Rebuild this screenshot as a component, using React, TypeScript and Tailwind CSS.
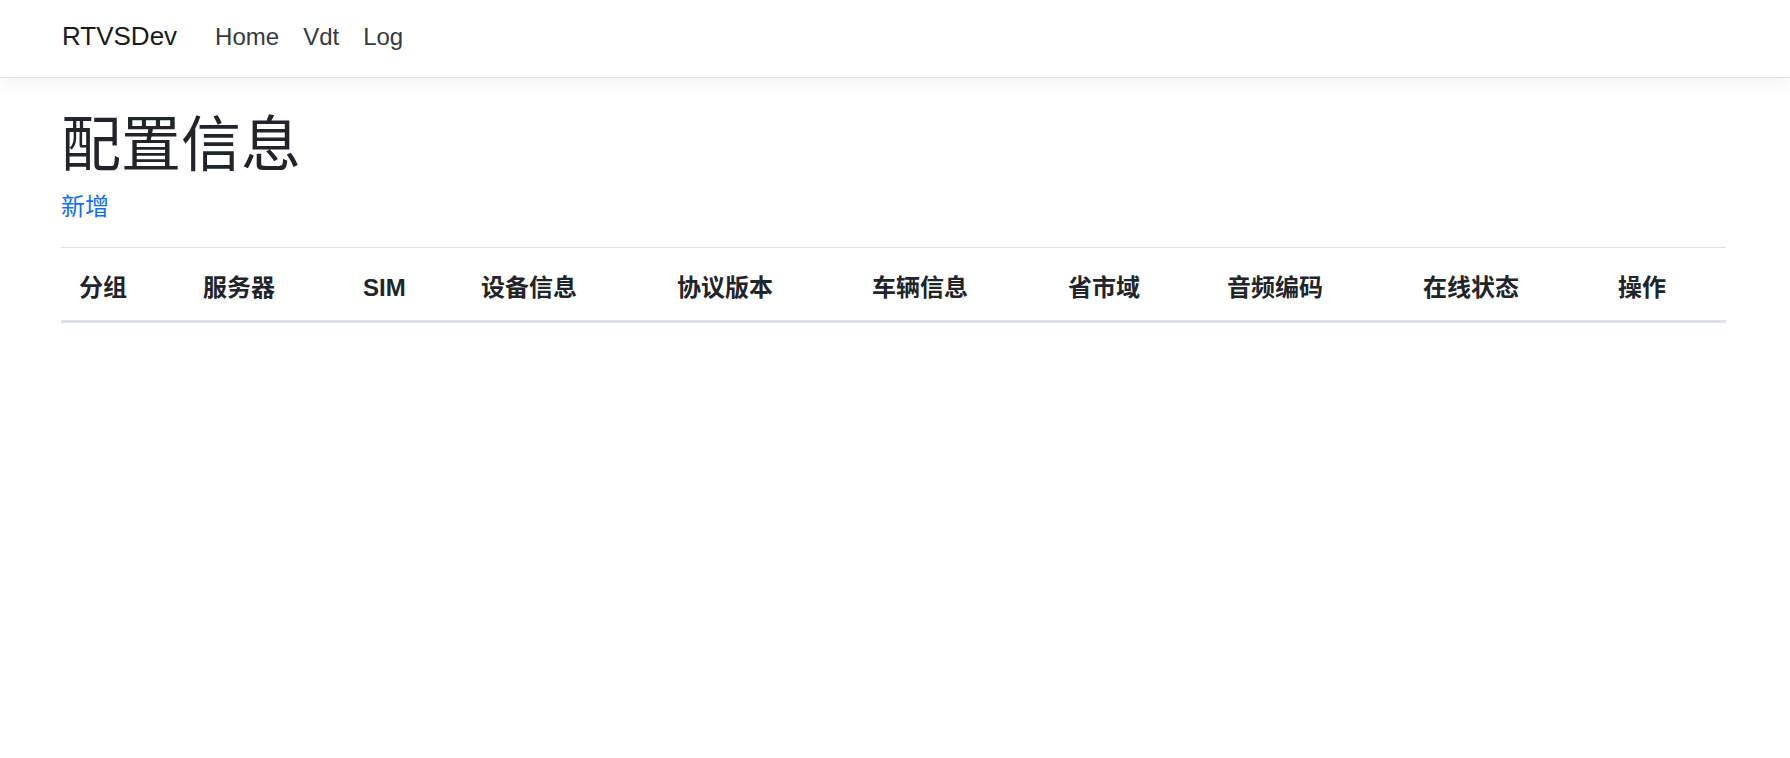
import React from "react";

const FONT = "font-['Liberation_Sans','Noto_Sans_CJK_SC',sans-serif]";

const COLUMNS = [
  { label: "分组", width: "w-[124px]" },
  { label: "服务器", width: "w-[160px]" },
  { label: "SIM", width: "w-[118px]" },
  { label: "设备信息", width: "w-[196px]" },
  { label: "协议版本", width: "w-[195px]" },
  { label: "车辆信息", width: "w-[196px]" },
  { label: "省市域", width: "w-[159px]" },
  { label: "音频编码", width: "w-[196px]" },
  { label: "在线状态", width: "w-[195px]" },
  { label: "操作", width: "flex-1" },
];

function Navbar() {
  return (
    <header className="h-[78px] bg-white border-b border-[#dee2e6] shadow-[0_6px_18px_rgba(0,0,0,0.05)]">
      <div className="h-full flex items-center pb-1 pl-[62px]">
        <a className="text-[26px] text-[#1a1a1a] mr-[38px]">RTVSDev</a>
        <nav className="flex items-center gap-[24px] text-[24px] text-[#343a40]">
          <a>Home</a>
          <a>Vdt</a>
          <a>Log</a>
        </nav>
      </div>
    </header>
  );
}

export default function App() {
  return (
    <div className={`min-h-[758px] bg-white text-[#212529] ${FONT}`}>
      <Navbar />

      <main className="pl-[61px] pr-[64px] pt-[32px]">
        <h1 className="h-[72px] leading-[72px] text-[60px] font-normal">配置信息</h1>
        <p className="mt-[7px] mb-[22px] leading-[36px] text-[24px]">
          <a className="text-[#0d6efd]">新增</a>
        </p>

        {/* Table header only, no rows */}
        <div className="border-t border-[#dee2e6]">
          <div className="flex h-[75px] items-center pt-[7px] border-b-[3px] border-[#dee2e6] text-[24px] font-bold">
            {COLUMNS.map((col) => (
              <div key={col.label} className={`${col.width} pl-[18px]`}>
                {col.label}
              </div>
            ))}
          </div>
        </div>
      </main>
    </div>
  );
}
